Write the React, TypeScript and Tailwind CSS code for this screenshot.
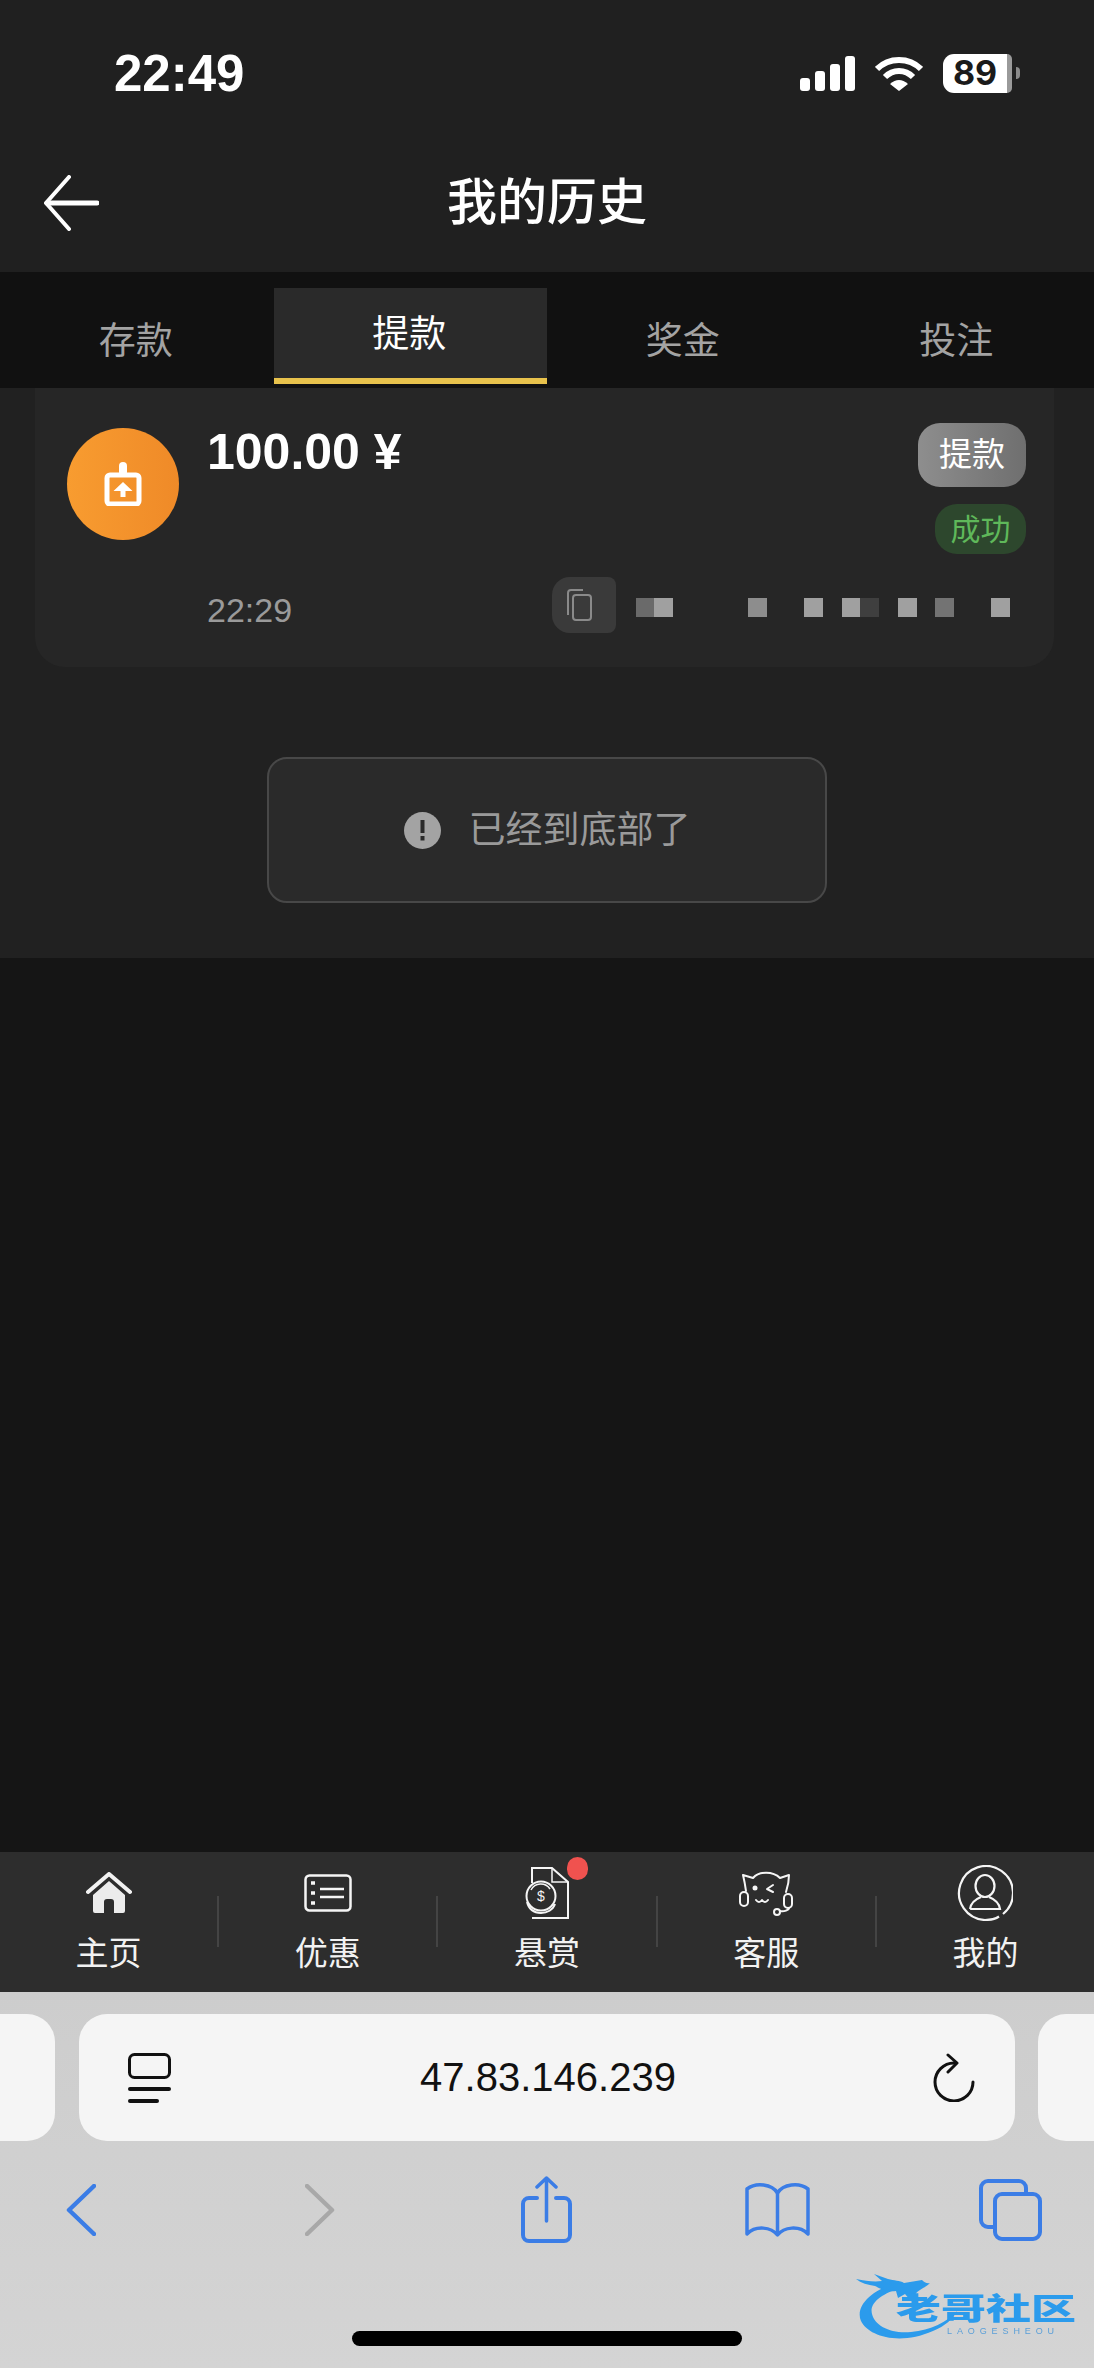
import React from "react";

const Arrow = () => (
  <svg width="56" height="56" viewBox="0 0 56 56" fill="none" stroke="#fff" strokeWidth="4" strokeLinecap="round" strokeLinejoin="round">
    <path d="M54 28H4" strokeWidth="5" />
    <path d="M26 2 3 28l23 26" />
  </svg>
);

const Signal = () => (
  <svg width="55" height="35" viewBox="0 0 55 35" fill="#fff">
    <rect x="0" y="22" width="10" height="13" rx="3" />
    <rect x="15" y="15" width="10" height="20" rx="3" />
    <rect x="30" y="8" width="10" height="27" rx="3" />
    <rect x="45" y="0" width="10" height="35" rx="3" />
  </svg>
);

const Wifi = () => (
  <svg width="48" height="35" viewBox="0 0 48 35" fill="none" stroke="#fff" strokeWidth="6">
    <path d="M2 13C14 1 34 1 46 13" />
    <path d="M10 21c8-8 20-8 28 0" />
    <path d="M15 28q9-8 18 0l-9 7Z" fill="#fff" stroke="none" />
  </svg>
);

const UploadGlyph = () => (
  <svg width="38" height="44" viewBox="0 0 38 44" fill="none">
    <rect x="3" y="13" width="32" height="29" rx="3" stroke="#fff" strokeWidth="5" />
    <rect x="15" y="0" width="8" height="14" rx="4" fill="#fff" />
    <path d="M19 20l9.500 9h-7V35h-5v-6h-7Z" fill="#fff" />
  </svg>
);

const CopyGlyph = () => (
  <svg width="26" height="32" viewBox="0 0 26 32" fill="none" stroke="#8a8a8a" strokeWidth="2">
    <path d="M2 26V4a3 3 0 0 1 3-3h12" />
    <rect x="7" y="6" width="18" height="25" rx="3" />
  </svg>
);

const Alert = () => (
  <svg width="37" height="37" viewBox="0 0 37 37">
    <circle cx="18.500" cy="18.500" r="18.500" fill="#a3a3a3" />
    <rect x="16.500" y="8" width="4" height="13" fill="#2a2a2a" />
    <rect x="16.500" y="24" width="4" height="4.500" fill="#2a2a2a" />
  </svg>
);

const Home = () => (
  <svg width="46" height="41" viewBox="0 0 46 41" fill="none">
    <path d="M2 20 23 2l21 18" stroke="#f2f2f2" strokeWidth="4" strokeLinecap="round" strokeLinejoin="round" />
    <path d="M23 9 39 23V39a2 2 0 0 1-2 2H28V30a3 3 0 0 0-3-3h-4a3 3 0 0 0-3 3V41H9a2 2 0 0 1-2-2V23Z" fill="#ececec" />
  </svg>
);

const Promo = () => (
  <svg width="48" height="38" viewBox="0 0 48 38" fill="none" stroke="#f5f5f5" strokeWidth="2.500">
    <rect x="1.500" y="1.500" width="45" height="35" rx="4" />
    <path d="M7 9h4M7 19h4M7 29h4" strokeWidth="3.500" />
    <path d="M16 15h24M16 23h24" strokeWidth="2.500" />
  </svg>
);

const Bounty = () => (
  <svg width="45" height="53" viewBox="0 0 45 53" fill="none" stroke="#f5f5f5" strokeWidth="2">
    <path d="M7 17V2h20l16 14v36H7" />
    <path d="M27 2v14h16" strokeWidth="1.500" />
    <circle cx="16" cy="30" r="14.500" fill="#2d2d2d" />
    <path d="M6 24a11 11 0 0 1 19-1" strokeWidth="1.500" />
    <path d="M2 36c2 8 8 11 14 11s12-3 14-9" />
    <text x="16" y="35" fontSize="14" fill="#f5f5f5" stroke="none" textAnchor="middle" fontFamily="Liberation Sans">$</text>
  </svg>
);

const Cat = () => (
  <svg width="54" height="46" viewBox="0 0 54 46" fill="none" stroke="#f5f5f5" strokeWidth="2" strokeLinecap="round" strokeLinejoin="round">
    <path d="M7 21C6 14 5 9 4 5l10 3c6-7 20-7 27 0l9-3c0 5-1 11-3 17" />
    <rect x="1" y="22" width="8" height="14" rx="4" />
    <rect x="45" y="24" width="8" height="14" rx="4" />
    <path d="M50 38c0 2-5 4-9 3" />
    <circle cx="38" cy="42" r="3" />
    <circle cx="16" cy="18" r="2.500" fill="#f5f5f5" stroke="none" />
    <path d="M34 15l-6 4 6 3" />
    <path d="M17 30q3 4 6 0 3 4 6 0" />
  </svg>
);

const Me = () => (
  <svg width="56" height="56" viewBox="0 0 56 56" fill="none" stroke="#f5f5f5" strokeWidth="2.200">
    <path d="M46 49A27 27 0 1 0 28 55c6 0 11-1.500 14-3.500" />
    <ellipse cx="28" cy="21" rx="9.500" ry="11" />
    <path d="M13 44c1-7 6-10 11-12M32 32c5 2 10 5 11 12H13" />
  </svg>
);

const TabsIcon = () => (
  <svg width="43" height="50" viewBox="0 0 43 50" fill="none" stroke="#111" strokeLinecap="round">
    <rect x="1.500" y="1.500" width="40" height="23" rx="5" strokeWidth="3" />
    <path d="M2 36h39" strokeWidth="4" />
    <path d="M2 48h27" strokeWidth="4" />
  </svg>
);

const Reload = () => (
  <svg width="42" height="49" viewBox="0 0 42 49" fill="none" stroke="#111" strokeWidth="3" strokeLinecap="round" strokeLinejoin="round">
    <path d="M21 10A19 19 0 1 0 40 29" />
    <path d="M15 2l9 8-9 9" />
  </svg>
);

const Chevron = ({ color, flip }: { color: string; flip?: boolean }) => (
  <svg width="30" height="52" viewBox="0 0 30 52" fill="none" stroke={color} strokeWidth="4.500" strokeLinecap="round" strokeLinejoin="round">
    <path d={flip ? "M2 2l25 24L2 50" : "M28 2 3 26l25 24"} />
  </svg>
);

const Share = () => (
  <svg width="53" height="67" viewBox="0 0 53 67" fill="none" stroke="#3b7de6" strokeWidth="4" strokeLinecap="round" strokeLinejoin="round">
    <path d="M26.500 2v43M17 11l9.500-9L36 11" strokeWidth="3.500" />
    <path d="M17 22H9a6 6 0 0 0-6 6v31a6 6 0 0 0 6 6h35a6 6 0 0 0 6-6V28a6 6 0 0 0-6-6h-8" />
  </svg>
);

const Book = () => (
  <svg width="67" height="55" viewBox="0 0 67 55" fill="none" stroke="#3b7de6" strokeWidth="3.500" strokeLinejoin="round">
    <path d="M33.500 11C28 2 12 0 3 7v45c9-9 24-7 30.500 1C40 45 55 43 64 52V7C55 0 39 2 33.500 11Z" />
    <path d="M33.500 11v42" />
  </svg>
);

const Pages = () => (
  <svg width="63" height="62" viewBox="0 0 63 62" fill="none" stroke="#3b7de6" strokeWidth="4">
    <path d="M14 48H9a7 7 0 0 1-7-7V9a7 7 0 0 1 7-7h31a7 7 0 0 1 7 7v5" />
    <rect x="16" y="15" width="45" height="45" rx="7" />
  </svg>
);

const Swirl = () => (
  <svg width="110" height="67" viewBox="0 0 110 67" fill="#2b9bec">
    <path d="M38 11C14 18-1 34 5 48c7 15 38 25 72 10 12-5 20-12 24-20-10 11-26 19-46 21C35 61 19 53 16 41c-3-11 10-21 30-26Z" />
    <path d="M0 6c10 2 18 3 26 2L18 1l14 5c6 2 12 1 16 4l18-3c2 2 5 4 8 3-4 5-12 6-15 12l-4 6-6-7-7 4-2-7C30 19 25 16 19 13 12 12 5 10 0 6Z" />
  </svg>
);

const NavItem = ({ icon, label }: { icon: React.ReactNode; label: string }) => (
  <div className="flex-1 flex flex-col items-center">
    <div className="h-[81px] flex items-center justify-center">{icon}</div>
    <span className="mt-1 text-[33px] leading-[34px] text-[#f2f2f2]">{label}</span>
  </div>
);

const NavDivider = () => <div className="w-[2px] h-[51px] mt-[44px] shrink-0 bg-[#444444]" />;

export default function App() {
  return (
    <div className="h-[2368px] w-[1094px] overflow-hidden flex flex-col bg-[#151515] font-['Liberation_Sans','Noto_Sans_CJK_SC',sans-serif]">
      {/* top bar */}
      <header className="h-[272px] shrink-0 bg-[#202020]">
        <div className="h-[146px] flex items-center pl-[114px] pr-[74px]">
          <span className="font-bold text-[51px] leading-none text-white">22:49</span>
          <div className="ml-auto flex items-center">
            <Signal />
            <div className="ml-5"><Wifi /></div>
            <div className="ml-5 w-[69px] h-[39px] flex">
              <div className="w-[64px] rounded-l-[11px] bg-white flex items-center justify-center text-[34px] font-bold leading-none text-[#1a1a1a] font-['Inter']">89</div>
              <div className="flex-1 rounded-r-[11px] bg-[#9a9a9a]" />
            </div>
            <div className="ml-1 w-1 h-3 rounded-r-full bg-[#8a8a8a]" />
          </div>
        </div>
        <div className="h-[114px] grid grid-cols-[1fr_auto_1fr] items-center pl-[43px]">
          <Arrow />
          <h1 className="-ml-[43px] text-[50px] leading-none font-medium text-white">我的历史</h1>
          <div />
        </div>
      </header>

      {/* tabs */}
      <nav className="h-[116px] shrink-0 pt-4 pb-1 grid grid-cols-4 bg-[#111111] text-[37px] leading-none">
        <div className="flex items-center justify-center pt-[10px] pr-[2px] text-[#a3a3a3]">存款</div>
        <div className="flex items-center justify-center pt-[3px] pr-[2px] bg-[#2a2a2a] border-b-[6px] border-[#e8c24c] text-white">提款</div>
        <div className="flex items-center justify-center pt-[10px] pr-[2px] text-[#a3a3a3]">奖金</div>
        <div className="flex items-center justify-center pt-[10px] pr-[2px] text-[#a3a3a3]">投注</div>
      </nav>

      {/* list */}
      <section className="h-[570px] shrink-0 bg-[#212121] px-[35px] pr-[40px]">
        <div className="h-[279px] flex rounded-b-[30px] bg-[#262626] pl-[32px] pr-[28px] pt-[35px]">
          <div className="mt-[5px] w-[112px] h-[112px] shrink-0 rounded-full flex items-center justify-center bg-linear-to-r from-[#f89c30] to-[#ef8a28]">
            <UploadGlyph />
          </div>
          <div className="ml-[28px] flex-1 flex flex-col">
            <div className="flex justify-between">
              <span className="text-[50px] leading-[58px] font-bold text-white">100.00 ¥</span>
              <div className="flex flex-col items-end gap-[17px]">
                <span className="w-[108px] h-[64px] flex items-center justify-center rounded-[22px] text-[33px] text-white bg-linear-to-r from-[#8e8e8e] to-[#6f6f6f]">提款</span>
                <span className="w-[91px] h-[50px] flex items-center justify-center rounded-[22px] text-[30px] text-[#5fb85a] bg-[#2d472d]">成功</span>
              </div>
            </div>
            <div className="mt-[23px] flex">
              <span className="mt-[16px] text-[34px] leading-[34px] text-[#9a9a9a]">22:29</span>
              <div className="ml-[260px] w-[64px] h-[56px] flex items-center justify-center pr-[10px] rounded-l-[18px] rounded-r-[8px] bg-[#3a3a3a]">
                <CopyGlyph />
              </div>
              <div className="mt-[21px] ml-[20px] flex">
                <div className="w-[18px] h-[19px] bg-[#6a6a6a]" />
                <div className="w-[19px] h-[19px] bg-[#a0a0a0]" />
                <div className="ml-[75px] w-[19px] h-[19px] bg-[#8d8d8d]" />
                <div className="ml-[37px] w-[19px] h-[19px] bg-[#a0a0a0]" />
                <div className="ml-[19px] w-[18px] h-[19px] bg-[#a0a0a0]" />
                <div className="w-[19px] h-[19px] bg-[#3f3f3f]" />
                <div className="ml-[19px] w-[19px] h-[19px] bg-[#a0a0a0]" />
                <div className="ml-[18px] w-[19px] h-[19px] bg-[#737373]" />
                <div className="ml-[37px] w-[19px] h-[19px] bg-[#a0a0a0]" />
              </div>
            </div>
          </div>
        </div>
        <div className="mt-[90px] ml-[232px] w-[560px] h-[146px] flex items-center justify-center gap-[28px] rounded-[20px] border-2 border-[#484848] bg-[#2a2a2a]">
          <Alert />
          <span className="text-[37px] leading-none text-[#9a9a9a]">已经到底部了</span>
        </div>
      </section>

      <main className="flex-1" />

      {/* bottom nav */}
      <footer className="h-[140px] shrink-0 flex bg-[#2d2d2d]">
        <NavItem icon={<Home />} label="主页" />
        <NavDivider />
        <NavItem icon={<Promo />} label="优惠" />
        <NavDivider />
        <NavItem
          icon={
            <div className="relative">
              <Bounty />
              <div className="absolute -top-[9px] left-[42px] w-[21px] h-[23px] rounded-full bg-[#f0524f]" />
            </div>
          }
          label="悬赏"
        />
        <NavDivider />
        <NavItem icon={<Cat />} label="客服" />
        <NavDivider />
        <NavItem icon={<Me />} label="我的" />
      </footer>

      {/* browser chrome */}
      <div className="relative h-[376px] shrink-0 pt-[22px] bg-linear-to-b from-[#cdcdcd] to-[#d4d4d4]">
        <div className="h-[127px] flex">
          <div className="w-[55px] rounded-r-[28px] bg-[#f5f5f5]" />
          <div className="ml-[24px] w-[936px] flex items-center rounded-[28px] bg-[#f5f5f5] pl-[49px] pr-[40px]">
            <TabsIcon />
            <span className="flex-1 text-center text-[40px] leading-none text-[#111111] -ml-[8px] -mt-[2px]">47.83.146.239</span>
            <Reload />
          </div>
          <div className="ml-[23px] flex-1 rounded-l-[28px] bg-[#f5f5f5]" />
        </div>
        <div className="mt-[35px] h-[67px] flex items-center pl-[66px]">
          <Chevron color="#3b7de6" />
          <div className="ml-[209px]"><Chevron color="#a8a8a8" flip /></div>
          <div className="ml-[185px]"><Share /></div>
          <div className="ml-[171px]"><Book /></div>
          <div className="ml-[168px]"><Pages /></div>
        </div>
        <div className="mt-[88px] mx-auto w-[390px] h-[15px] rounded-full bg-black" />

        {/* watermark */}
        <div className="absolute left-[856px] top-[281px] w-[220px] h-[67px] blur-[0.6px]">
          <Swirl />
          <span className="absolute left-[40px] top-[18px] w-[184px] text-[45px] leading-[56px] font-black whitespace-nowrap scale-y-[0.65] origin-top-left text-[#2b9bec]">老哥社区</span>
          <span className="absolute left-[91px] top-[53px] text-[9px] leading-[10px] tracking-[4.9px] text-[#5a9fd8] font-['Liberation_Sans'] whitespace-nowrap">LAOGESHEOU</span>
        </div>
      </div>
    </div>
  );
}
